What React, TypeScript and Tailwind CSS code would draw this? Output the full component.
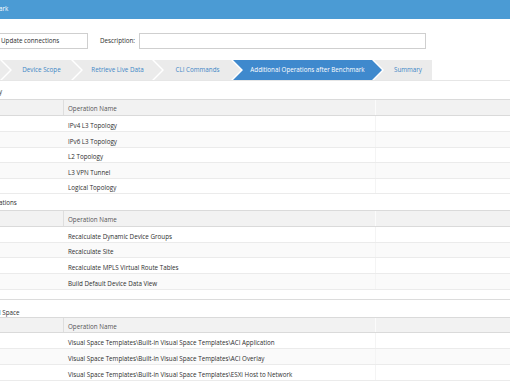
import React from "react";

const chevron =
  "[clip-path:polygon(0_0,calc(100%_-_10px)_0,100%_50%,calc(100%_-_10px)_100%,0_100%,10px_50%)]";
const notchOnly = "[clip-path:polygon(0_0,100%_0,100%_100%,0_100%,10px_50%)]";

function Table({
  rows,
  heights,
  headerH,
}: {
  rows: string[];
  heights: number[];
  headerH: number;
}) {
  return (
    <div>
      <div
        className="grid grid-cols-[64px_312px_1fr] bg-[#f2f2f2] border-y border-[#dadada] text-[#555]"
        style={{ height: headerH }}
      >
        <div className="border-r border-[#dedede]" />
        <div className="flex items-center pl-[4px] pt-[4px] border-r border-[#fbfbfb]">Operation Name</div>
        <div />
      </div>
      {rows.map((r, i) => (
        <div
          key={i}
          className={
            "grid grid-cols-[64px_312px_1fr] border-b border-[#ebebeb] " +
            (i % 2 === 1 ? "bg-[#fafafa]" : "bg-white")
          }
          style={{ height: heights[i] }}
        >
          <div />
          <div className="flex items-center pl-[4px] pt-[5px] border-r border-[#f4f4f4]">{r}</div>
          <div />
        </div>
      ))}
    </div>
  );
}

export default function App() {
  return (
    <div className="w-[510px] h-[382px] overflow-hidden bg-white font-['Open_Sans',sans-serif] text-[6.25px] leading-none text-[#2e2e2e]">
      <div className="h-[19px] bg-[#4b9bd4] flex items-center text-white">
        <span className="-ml-[1px]">ark</span>
      </div>

      <div className="mt-[14px] h-[16px] flex items-center">
        <div className="-ml-[3px] w-[91px] h-[16px] border border-[#cfcfcf] flex items-center pl-[3px]">
          Update connections
        </div>
        <span className="ml-[12px] w-[39px]">Description:</span>
        <div className="w-[287px] h-[16px] border border-[#cfcfcf]" />
      </div>

      <div className="mt-[11px] h-[21px] border-b border-[#e6e6e6]">
        <div className="flex h-[20px] text-[#3d86c6]">
          <div className={"-ml-[50px] w-[60px] h-full bg-[#ebebeb] " + chevron} />
          <div className={"-ml-[8px] w-[79px] h-full bg-[#ebebeb] flex items-center justify-center px-[5px] " + chevron}>
            Device Scope
          </div>
          <div className={"-ml-[8px] w-[89px] h-full bg-[#ebebeb] flex items-center justify-center px-[5px] " + chevron}>
            Retrieve Live Data
          </div>
          <div className={"-ml-[8px] w-[87px] h-full bg-[#ebebeb] flex items-center justify-center px-[5px] " + chevron}>
            CLI Commands
          </div>
          <div className={"-ml-[8px] w-[149px] h-full bg-[#3f89cd] text-white flex items-center justify-center px-[5px] " + chevron}>
            Additional Operations after Benchmark
          </div>
          <div className={"-ml-[8px] w-[58px] h-full bg-[#ebebeb] flex items-center justify-center pl-[10px] " + notchOnly}>
            Summary
          </div>
        </div>
      </div>

      <div className="h-[18px] flex items-center pt-[4px]">
        <span className="-ml-[1px]">y</span>
      </div>
      <Table
        headerH={17}
        heights={[16, 16, 15, 16, 15]}
        rows={["IPv4 L3 Topology", "IPv6 L3 Topology", "L2 Topology", "L3 VPN Tunnel", "Logical Topology"]}
      />

      <div className="h-[16px] flex items-center pt-[3px]">
        <span className="-ml-[1px]">ations</span>
      </div>
      <Table
        headerH={17}
        heights={[16, 15, 16, 16]}
        rows={[
          "Recalculate Dynamic Device Groups",
          "Recalculate Site",
          "Recalculate MPLS Virtual Route Tables",
          "Build Default Device Data View",
        ]}
      />
      <div className="h-[10px] border-b border-[#dcdcdc]" />

      <div className="h-[17px] flex items-center pt-[9px]">
        <span className="-ml-[1px]">l Space</span>
      </div>
      <Table
        headerH={16}
        heights={[16, 16, 16]}
        rows={[
          "Visual Space Templates\\Built-in Visual Space Templates\\ACI Application",
          "Visual Space Templates\\Built-in Visual Space Templates\\ACI Overlay",
          "Visual Space Templates\\Built-in Visual Space Templates\\ESXi Host to Network",
        ]}
      />
    </div>
  );
}
